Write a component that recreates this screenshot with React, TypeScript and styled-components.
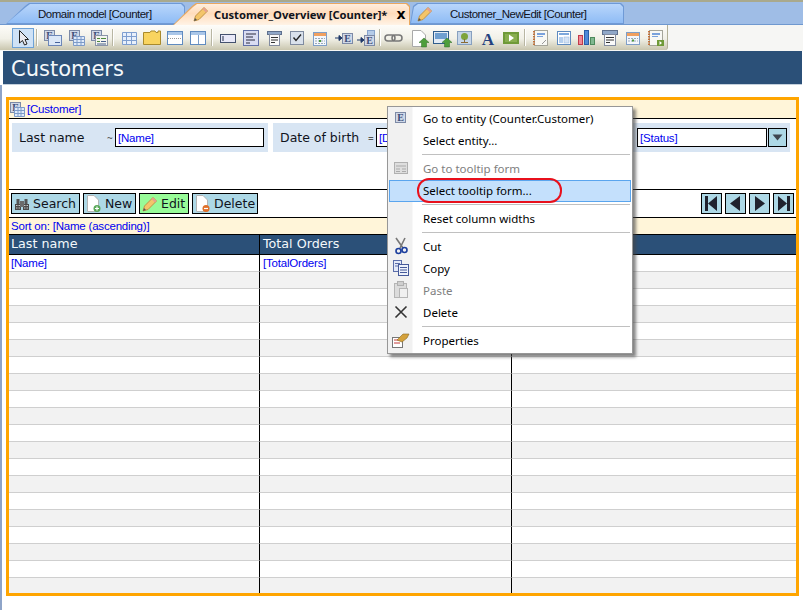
import { ReactNode } from 'react'
import styled, { createGlobalStyle } from 'styled-components'

const GlobalStyle = createGlobalStyle`
  html, body {
    margin: 0;
    padding: 0;
    background: #fff;
  }
  * {
    box-sizing: border-box;
  }
`

const UI_FONT = `"Noto Sans", "Liberation Sans", sans-serif`
const NARROW_FONT = `"Liberation Sans", Arial, sans-serif`
const FORM_FONT = `"DejaVu Sans", "Liberation Sans", sans-serif`

const Page = styled.div`
  position: relative;
  width: 803px;
  height: 610px;
  overflow: hidden;
  background: #fff;
  font-family: ${UI_FONT};
`

const TopEdge = styled.div`
  height: 2px;
  background: #a9a98d;
`

const TabStrip = styled.div`
  display: flex;
  align-items: flex-end;
  height: 23px;
  padding-left: 6px;
  background: #9fbde6;
  border-bottom: 1px solid #6f98cf;
`

const Tab = styled.div<{ $active?: boolean; $slant: number; $width: number; $overlap?: number }>`
  position: relative;
  display: flex;
  align-items: center;
  flex: none;
  width: ${({ $width }) => $width}px;
  height: ${({ $active }) => ($active ? 22 : 21)}px;
  margin-bottom: ${({ $active }) => ($active ? -1 : 0)}px;
  margin-left: ${({ $overlap }) => -($overlap ?? 0)}px;
  z-index: ${({ $active }) => ($active ? 2 : 1)};
  font-family: ${({ $active }) => ($active ? UI_FONT : NARROW_FONT)};
  font-size: ${({ $active }) => ($active ? 11.2 : 11.5)}px;
  font-weight: ${({ $active }) => ($active ? 700 : 400)};
  letter-spacing: ${({ $active }) => ($active ? 0 : -0.5)}px;
  color: #10131c;
  white-space: nowrap;

  &::before,
  &::after {
    content: '';
    position: absolute;
    clip-path: polygon(
      0 100%,
      ${({ $slant }) => $slant}px 3px,
      ${({ $slant }) => $slant + 4}px 0,
      calc(100% - 3px) 0,
      100% 3px,
      100% 100%
    );
  }

  &::before {
    inset: 0;
    background: ${({ $active }) => ($active ? '#e8a860' : '#6f9ad6')};
  }

  &::after {
    inset: 1px 1px ${({ $active }) => ($active ? 0 : 1)}px 1px;
    background: ${({ $active }) =>
      $active
        ? 'linear-gradient(#ffeede, #ffdcbc 45%, #fff3e6)'
        : 'linear-gradient(#b9d6fb, #8fbcf5)'};
  }
`

const TabContent = styled.div<{ $left: number }>`
  position: relative;
  z-index: 1;
  display: flex;
  align-items: center;
  padding-left: ${({ $left }) => $left}px;
`

const TabLabel = styled.span<{ $left: number }>`
  position: relative;
  z-index: 1;
  margin-left: ${({ $left }) => $left}px;
`

const TabClose = styled.span`
  position: relative;
  z-index: 1;
  margin-left: 9px;
  font-family: ${FORM_FONT};
  font-size: 14px;
  line-height: 15px;
  font-weight: 700;
  color: #000;
`

const ToolRow = styled.div`
  height: 26px;
  background: #f6f6f4;
`

const Toolbar = styled.div`
  display: flex;
  align-items: center;
  width: 668px;
  height: 25px;
  padding-left: 3px;
  background: linear-gradient(#fdfcf9, #f1f0e7 55%, #c9c6ae);
  border-right: 1px solid #b2af97;
  border-bottom-right-radius: 3px;
`

const Grip = styled.div`
  width: 5px;
  height: 17px;
  margin: 0 6px 0 3px;
  background: repeating-linear-gradient(#9e9e8c 0 2px, transparent 2px 4px);
  background-size: 2px 100%;
  background-repeat: no-repeat;
`

const ToolSlot = styled.div<{ $selected?: boolean }>`
  display: flex;
  align-items: center;
  justify-content: center;
  flex: none;
  width: ${({ $selected }) => ($selected ? 22 : 23)}px;
  height: ${({ $selected }) => ($selected ? 20 : 22)}px;
  background: ${({ $selected }) => ($selected ? '#cfe2f6' : 'transparent')};
  border: ${({ $selected }) => ($selected ? '1px solid #6ea2d6' : 'none')};
`

const ToolGroup = styled.div`
  display: contents;
`

const ToolSep = styled.div`
  flex: none;
  width: 2px;
  height: 17px;
  margin: 0 3px 0 2px;
  background: linear-gradient(90deg, #b8b6a3 50%, #fff 50%);
`

const HeaderBar = styled.header`
  height: 34px;
  margin: 0 1px 0 3px;
  padding: 3px 0 0 8px;
  background: #2b5078;
  border-bottom: 1px solid #c4d0dc;
  font-family: ${FORM_FONT};
  font-size: 21px;
  line-height: 31px;
  color: #f4f8fb;
`

const Content = styled.main`
  height: 525px;
  padding: 12px 4px 0 6px;
  box-shadow: inset 2px 0 0 #8ea4c8;
`

const Frame = styled.section`
  height: 499px;
  overflow: hidden;
  border: 3px solid #ffa500;
  background: #fff;
`

const EntityRow = styled.div`
  display: flex;
  align-items: center;
  gap: 2px;
  height: 19px;
  background: #fff5d9;
  border-bottom: 1px solid #000;
`

const BlueText = styled.span`
  font-family: ${NARROW_FONT};
  font-size: 11.5px;
  letter-spacing: -0.2px;
  color: #0000f0;
  white-space: nowrap;
`

const FilterArea = styled.div`
  display: grid;
  grid-template-columns: repeat(3, 256px);
  gap: 5px;
  align-items: start;
  height: 71px;
  padding: 4px 0 0 3px;
  border-bottom: 1px solid #000;
`

const FilterBlock = styled.div`
  display: flex;
  align-items: center;
  height: 29px;
  padding-left: 7px;
  background: #d8e5f3;
`

const FilterLabel = styled.span<{ $width: number }>`
  flex: none;
  width: ${({ $width }) => $width}px;
  font-family: ${FORM_FONT};
  font-size: 12.5px;
  color: #10131c;
`

const Operator = styled.span`
  flex: none;
  width: 8px;
  font-size: 10px;
  color: #555;
`

const SearchInput = styled.div<{ $width: number }>`
  display: flex;
  align-items: center;
  flex: none;
  width: ${({ $width }) => $width}px;
  height: 19px;
  padding-left: 2px;
  background: #fff;
  border: 1px solid #000;
`

const DropButton = styled.div`
  display: flex;
  align-items: center;
  justify-content: center;
  flex: none;
  width: 19px;
  height: 19px;
  margin-left: 1px;
  background: #add8e6;
  border: 1px solid #000;
`

const ActionBar = styled.div`
  display: flex;
  align-items: center;
  height: 28px;
  padding: 0 2px;
  border-bottom: 1px solid #000;
`

const ActionButtons = styled.div`
  display: flex;
  gap: 3px;
`

const ActionButton = styled.div<{ $width: number; $green?: boolean }>`
  display: flex;
  align-items: center;
  gap: 3px;
  width: ${({ $width }) => $width}px;
  height: 21px;
  padding-left: 2px;
  background: ${({ $green }) => ($green ? '#98fb98' : '#add8e6')};
  border: 1px solid #000;
  font-family: ${FORM_FONT};
  font-size: 12.5px;
  color: #10131c;
`

const PagingButtons = styled.div`
  display: flex;
  gap: 3px;
  margin-left: auto;
`

const PagingButton = styled.div`
  display: flex;
  align-items: center;
  justify-content: center;
  width: 21px;
  height: 21px;
  background: #add8e6;
  border: 1px solid #000;
`

const SortRow = styled.div`
  display: flex;
  align-items: center;
  height: 17px;
  padding-left: 2px;
  background: #fff5d9;
  border-bottom: 1px solid #000;
`

const GridRow = styled.div`
  display: grid;
  grid-template-columns: 251px 252px 1fr;
`

const HeadCell = styled.div`
  height: 20px;
  padding-left: 2px;
  background: #2b5078;
  border-right: 1px solid #000;
  border-bottom: 1px solid #000;
  font-family: ${FORM_FONT};
  font-size: 12.7px;
  line-height: 18px;
  color: #f4f8fb;

  & + & {
    padding-left: 3px;
  }

  &:last-child {
    border-right: none;
  }
`

const Cell = styled.div<{ $alt: boolean }>`
  display: flex;
  align-items: center;
  height: 17px;
  padding-left: 2px;
  background: ${({ $alt }) => ($alt ? '#f2f2f2' : '#fff')};
  border-right: 1px solid #000;
  border-bottom: 1px solid #cfcfcf;

  & + & {
    padding-left: 3px;
  }

  &:last-child {
    border-right: none;
  }
`

const Menu = styled.div`
  position: absolute;
  left: 387px;
  top: 106px;
  width: 246px;
  padding: 1px;
  background: linear-gradient(90deg, #f1f1f1 24px, #fff 25px);
  border: 1px solid #979797;
  box-shadow: 3px 3px 3px rgba(70, 70, 70, 0.65);
  z-index: 5;
`

const MenuEntry = styled.div<{ $active?: boolean; $disabled?: boolean }>`
  position: relative;
  display: flex;
  align-items: center;
  height: 22px;
  padding-bottom: 2px;
  font-size: 11.5px;
  color: ${({ $disabled }) => ($disabled ? '#808080' : '#000')};
  background: ${({ $active }) => ($active ? '#c4e0fc' : 'transparent')};
  outline: ${({ $active }) => ($active ? '1px solid #5aa5ee' : 'none')};
  outline-offset: -1px;
`

const MenuIcon = styled.span`
  display: flex;
  align-items: center;
  justify-content: center;
  flex: none;
  width: 24px;
  margin-right: 10px;
`

const MenuRule = styled.div`
  height: 1px;
  margin: 2px 1px 3px 33px;
  background: #c0c0c0;
`

const RedOval = styled.div`
  position: absolute;
  left: 28px;
  top: -2px;
  width: 145px;
  height: 25px;
  border: 2px solid #e8101c;
  border-radius: 12px;
`

const Glyph = styled.svg`
  display: block;
  flex: none;
  overflow: visible;
`

const Icon = ({ w = 20, h = 18, children }: { w?: number; h?: number; children: ReactNode }) => (
  <Glyph width={w} height={h} viewBox={`0 0 ${w} ${h}`}>
    {children}
  </Glyph>
)

const EntityBadge = ({ x = 1, y = 1 }: { x?: number; y?: number }) => (
  <>
    <rect x={x + 0.5} y={y + 0.5} width="10" height="10" fill="#cfd8e8" stroke="#7d8aa6" />
    <text x={x + 5.5} y={y + 9} fontSize="10" fontWeight="700" fontFamily="Liberation Serif, serif" textAnchor="middle" fill="#3b4d78">
      E
    </text>
  </>
)

const GreenArrow = () => (
  <path d="M15 9 L20 13.5 H17.5 V18 H12.5 V13.5 H10 Z" fill="#4e9e3c" stroke="#2f6f25" strokeWidth="0.5" />
)

const Page16 = ({ x = 3 }: { x?: number }) => (
  <path d={`M${x + 0.5} 1.5 H${x + 9} L${x + 13.5} 6 V17.5 H${x + 0.5} Z`} fill="#fff" stroke="#a9a9a9" />
)

const Notebook = () => (
  <>
    <rect x="3.5" y="1.5" width="13" height="15" fill="#f8f8f4" stroke="#a5a59a" />
    <path d="M3 2 V17" stroke="#c2713a" strokeWidth="2" strokeDasharray="1.5 1" />
    <rect x="6" y="4" width="8" height="2" fill="#7aa2dc" />
    <rect x="6" y="7" width="6" height="1" fill="#7aa2dc" />
  </>
)

const toolIcons: ReactNode[][] = [
  [
    <Icon key="dv">
      <EntityBadge />
      <rect x="5.5" y="6.5" width="13" height="10" fill="#dbe7f7" stroke="#6d87b8" />
      <rect x="12" y="13" width="5" height="1" fill="#47639a" />
    </Icon>,
    <Icon key="dg">
      <EntityBadge x={3} />
      <path d="M7.5 7.5 H18.5 V16.5 H7.5 Z M7.5 10.5 H18.5 M7.5 13.5 H18.5 M11 7.5 V16.5 M15 7.5 V16.5" fill="#dfeafa" stroke="#7d9bc8" />
    </Icon>,
    <Icon key="tg">
      <EntityBadge x={2} />
      <rect x="6.5" y="6.5" width="12" height="10" fill="#f4f4ee" stroke="#8a94a8" />
      <path d="M8 9.5 H11 M8 12.5 H11 M12 9.5 H17" stroke="#4d8a3c" />
      <path d="M12 12.5 H17 M8 15 H17" stroke="#48608c" />
    </Icon>,
  ],
  [
    <Icon key="tb">
      <path d="M3.5 3.5 H17.5 V15.5 H3.5 Z M3.5 7.5 H17.5 M3.5 11.5 H17.5 M7.5 3.5 V15.5 M12.5 3.5 V15.5" fill="#e8f0fb" stroke="#7f9fd0" />
    </Icon>,
    <Icon key="fd">
      <path d="M1.5 3.5 H8 L9 2 H13 L14 3.5 H16 V2 H18.5 V15.5 H1.5 Z" fill="#f9d45f" stroke="#a98a2c" />
    </Icon>,
    <Icon key="lr">
      <rect x="2.5" y="2.5" width="15" height="13" fill="#fff" stroke="#5f8bc0" />
      <rect x="3" y="3" width="14" height="3" fill="#a9c6e8" />
      <path d="M3 9.5 H17" stroke="#999" strokeDasharray="1 1" />
    </Icon>,
    <Icon key="lc">
      <rect x="2.5" y="2.5" width="15" height="13" fill="#fff" stroke="#5f8bc0" />
      <rect x="3" y="3" width="14" height="3" fill="#a9c6e8" />
      <path d="M10.5 6 V15" stroke="#7a9cc8" />
    </Icon>,
  ],
  [
    <Icon key="tx">
      <rect x="2.5" y="5.5" width="15" height="8" fill="#e9e9f8" stroke="#44516e" />
      <path d="M5 7 V12" stroke="#25304a" />
    </Icon>,
    <Icon key="ta">
      <rect x="2.5" y="1.5" width="15" height="15" fill="#d9dcf2" stroke="#6170a8" />
      <path d="M5 5 H15 M5 8 H12 M5 11 H14 M5 14 H9" stroke="#2b2b3e" />
    </Icon>,
    <Icon key="dd">
      <rect x="3.5" y="2.5" width="14" height="3" fill="#8fa7c8" stroke="#5e708e" />
      <rect x="5.5" y="5.5" width="10" height="11" fill="#fafafa" stroke="#838ca0" />
      <path d="M7 8.5 H14 M7 11 H14 M7 13.5 H11" stroke="#333" />
    </Icon>,
    <Icon key="cb">
      <rect x="3.5" y="2.5" width="13" height="13" fill="#d9e1ec" stroke="#7f8ba0" />
      <path d="M6.5 8.5 L9 11.5 L14 5.5" fill="none" stroke="#222" strokeWidth="1.4" />
    </Icon>,
    <Icon key="dp">
      <rect x="3.5" y="3.5" width="13" height="13" fill="#f4f7fc" stroke="#7f9fc8" />
      <rect x="4" y="4" width="12" height="3" fill="#f0a060" />
      <path d="M5 9.5 H15 M5 12 H15 M5 14.5 H15" stroke="#9ab" strokeDasharray="2 1" />
      <rect x="9" y="11" width="2" height="2" fill="#4d9a3c" />
    </Icon>,
    <Icon key="ae">
      <path d="M2 9 H6 M6 6.5 L9 9 L6 11.5 Z" fill="#1f3868" stroke="#1f3868" />
      <EntityBadge x={9} y={4} />
    </Icon>,
    <Icon key="as">
      <rect x="11.5" y="1.5" width="7" height="10" fill="#b5cbe8" stroke="#88a4cc" />
      <path d="M1 11 H5 M5 8.5 L8 11 L5 13.5 Z" fill="#1f3868" stroke="#1f3868" />
      <EntityBadge x={8} y={6} />
    </Icon>,
  ],
  [
    <Icon key="ln">
      <rect x="-1" y="6" width="10" height="6" rx="3" fill="none" stroke="#777" strokeWidth="1.5" />
      <rect x="6" y="6" width="10" height="6" rx="3" fill="none" stroke="#777" strokeWidth="1.5" />
    </Icon>,
    <Icon key="pu">
      <Page16 />
      <GreenArrow />
    </Icon>,
    <Icon key="iu">
      <rect x="1.5" y="2.5" width="15" height="12" fill="#e2ebf5" stroke="#2f5d8c" />
      <rect x="3" y="4" width="12" height="6" fill="#6f9fd0" />
      <GreenArrow />
    </Icon>,
    <Icon key="im">
      <rect x="2.5" y="2.5" width="14" height="13" fill="#c6d6e8" stroke="#87a0bf" />
      <circle cx="9.5" cy="7.5" r="3.5" fill="#7ea43c" />
      <path d="M9.5 10 V13 M6 13.5 H13" stroke="#8a6b34" />
    </Icon>,
    <Icon key="lb">
      <text x="10" y="15.5" fontSize="17" fontWeight="700" fontFamily="Liberation Serif, serif" textAnchor="middle" fill="#24417f">
        A
      </text>
    </Icon>,
    <Icon key="mv" w={18}>
      <rect x="1" y="3" width="16" height="12" fill="#6f9a38" />
      <rect x="3" y="5" width="12" height="8" fill="#88ae4e" />
      <path d="M7 5.5 L12 9 L7 12.5 Z" fill="#fff" />
    </Icon>,
  ],
  [
    <Icon key="nb">
      <Notebook />
      <path d="M11 15 L15 11" stroke="#999" />
    </Icon>,
    <Icon key="lo">
      <rect x="3.5" y="2.5" width="13" height="13" fill="#fff" stroke="#5f8bc0" />
      <rect x="5" y="4" width="10" height="2" fill="#7ea8dc" />
      <rect x="5" y="8" width="4" height="6" fill="#b5cfee" />
      <rect x="10" y="8" width="5" height="6" fill="#d5e3f5" stroke="#8fb0da" strokeWidth="0.5" />
    </Icon>,
    <Icon key="ch">
      <rect x="1.5" y="6.5" width="4" height="9" fill="#f08a96" stroke="#c23a4a" />
      <rect x="7.5" y="1.5" width="4" height="14" fill="#4f8ad8" stroke="#2b5ea8" />
      <rect x="13.5" y="8.5" width="4" height="7" fill="#80b890" stroke="#4d8a5c" />
    </Icon>,
    <Icon key="wn">
      <rect x="2.5" y="1.5" width="15" height="4" fill="#8fa7c8" stroke="#5e708e" />
      <rect x="4.5" y="5.5" width="11" height="11" fill="#fafafa" stroke="#838ca0" />
      <path d="M6 8.5 H14 M6 11 H14 M6 13.5 H10" stroke="#333" />
    </Icon>,
    <Icon key="ca">
      <rect x="3.5" y="3.5" width="13" height="12" fill="#f4f7fc" stroke="#7f9fc8" />
      <rect x="4" y="4" width="12" height="3" fill="#f0a060" />
      <path d="M5 9.5 H15 M5 12 H15" stroke="#9ab" strokeDasharray="2 1" />
      <rect x="9" y="10.5" width="2" height="2" fill="#4d9a3c" />
    </Icon>,
    <Icon key="np">
      <Notebook />
      <rect x="11" y="11" width="7" height="6" fill="#6f9a38" />
      <path d="M13.5 12 L16 14 L13.5 16 Z" fill="#fff" />
    </Icon>,
  ],
]

const Pointer = () => (
  <Icon w={14} h={18}>
    <path d="M3.5 1.5 V14 L6.5 11.5 L8.5 16 L11 15 L9 10.5 H12.5 Z" fill="#e9e9ee" stroke="#222" />
  </Icon>
)

const Pencil = ({ size = 16 }: { size?: number }) => (
  <Glyph width={size} height={size} viewBox="0 0 16 16">
    <path d="M1 15 L2.5 10 L11 1.5 L14.5 5 L6 13.5 Z" fill="#f4c56a" stroke="#c29445" />
    <path d="M1 15 L2 12 L4 14 Z" fill="#555" />
    <path d="M11 1.5 L14.5 5 L13 6.5 L9.5 3 Z" fill="#e8a090" />
  </Glyph>
)

const Binoculars = () => (
  <Icon w={16} h={16}>
    <path d="M1 8 H7 V14 H1 Z M9 8 H15 V14 H9 Z" fill="#4a4a4a" />
    <path d="M2 9.5 H3.5 M4.5 9.5 H6 M2 12 H3.5 M4.5 12 H6 M10 9.5 H11.5 M12.5 9.5 H14 M10 12 H11.5 M12.5 12 H14" stroke="#c8c8c8" />
    <rect x="6" y="5" width="4" height="6" fill="#6b6b6b" />
    <rect x="2.5" y="3" width="3" height="5" fill="#555" />
    <rect x="10.5" y="3" width="3" height="5" fill="#555" />
  </Icon>
)

const PageBadge = ({ fill, mark }: { fill: string; mark: string }) => (
  <Icon w={16} h={18}>
    <path d="M1.5 0.5 H8 L12.5 5 V16.5 H1.5 Z" fill="#fff" stroke="#b5b5b5" />
    <circle cx="11" cy="13.5" r="3.5" fill={fill} />
    <path d={mark} stroke="#fff" strokeWidth="1.2" />
  </Icon>
)

const PagingGlyph = ({ kind }: { kind: 'first' | 'prev' | 'next' | 'last' }) => {
  const paths = {
    first: 'M3 2 H6 V17 H3 Z M6 9.5 L15 2 V17 Z',
    prev: 'M4 9.5 L14 2 V17 Z',
    next: 'M15 9.5 L5 2 V17 Z',
    last: 'M16 2 H13 V17 H16 Z M13 9.5 L4 2 V17 Z',
  }
  return (
    <Icon w={19} h={19}>
      <path d={paths[kind]} fill="#20222e" />
    </Icon>
  )
}

const Scissors = () => (
  <Icon w={16} h={18}>
    <path d="M3 1 L10 11 M12 1 L7 11" stroke="#777" strokeWidth="1.6" />
    <circle cx="5.5" cy="14" r="2.5" fill="none" stroke="#1c3f9e" strokeWidth="1.6" />
    <circle cx="11.5" cy="13" r="2.5" fill="none" stroke="#1c3f9e" strokeWidth="1.6" />
  </Icon>
)

const CopyIcon = () => (
  <Icon w={16} h={16}>
    <rect x="0.5" y="0.5" width="8" height="11" fill="#e3e9f8" stroke="#5c6eaa" />
    <path d="M2 3.5 H7 M2 6 H7" stroke="#5c6eaa" />
    <rect x="5.5" y="4.5" width="10" height="11" fill="#eef2fb" stroke="#465a9a" />
    <path d="M7 7.5 H14 M7 10 H14 M7 12.5 H14" stroke="#465a9a" />
  </Icon>
)

const PasteIcon = () => (
  <Icon w={16} h={18}>
    <rect x="1.5" y="2.5" width="12" height="14" fill="#dcdcdc" stroke="#b5b5b5" />
    <rect x="4.5" y="0.5" width="6" height="4" fill="#cfcfcf" stroke="#b0b0b0" />
    <rect x="6.5" y="7.5" width="8" height="9" fill="#f0f0f0" stroke="#b5b5b5" />
  </Icon>
)

const DeleteIcon = () => (
  <Icon w={14} h={14}>
    <path d="M1.5 1.5 L12.5 12.5 M12.5 1.5 L1.5 12.5" stroke="#333" strokeWidth="1.6" />
  </Icon>
)

const PropertiesIcon = () => (
  <Icon w={18} h={16}>
    <rect x="0.5" y="5.5" width="10" height="10" fill="#fff" stroke="#777" />
    <path d="M2 8 H8 M2 11 H8" stroke="#c23a3a" />
    <path d="M5 8 L11 2 L17 2 L15 6 L10 10 Z" fill="#d4a13c" stroke="#8a6a24" strokeWidth="0.6" />
  </Icon>
)

const FormIcon = () => (
  <Icon w={15} h={15}>
    <rect x="0.5" y="1.5" width="13" height="11" fill="#dedede" stroke="#b0b0b0" />
    <path d="M2 5 H12 M2 8 H6 M8 8 H12 M2 10.5 H6 M8 10.5 H12" stroke="#aaa" />
  </Icon>
)

const ROW_COUNT = 20

function App() {
  return (
    <Page>
      <GlobalStyle />
      <TopEdge />
      <TabStrip>
        <Tab $slant={19} $width={179}>
          <TabLabel $left={32}>Domain model [Counter]</TabLabel>
        </Tab>
        <Tab $active $slant={19} $width={237} $overlap={12}>
          <TabContent $left={20}>
            <Pencil />
          </TabContent>
          <TabLabel $left={5}>Customer_Overview [Counter]*</TabLabel>
          <TabClose>x</TabClose>
        </Tab>
        <Tab $slant={3} $width={214}>
          <TabContent $left={7}>
            <Pencil />
          </TabContent>
          <TabLabel $left={17}>Customer_NewEdit [Counter]</TabLabel>
        </Tab>
      </TabStrip>
      <ToolRow>
        <Toolbar>
          <Grip />
          <ToolSlot $selected>
            <Pointer />
          </ToolSlot>
          {toolIcons.map((group, groupIndex) => (
            <ToolGroup key={groupIndex}>
              <ToolSep />
              {group.map((icon, iconIndex) => (
                <ToolSlot key={iconIndex}>{icon}</ToolSlot>
              ))}
            </ToolGroup>
          ))}
        </Toolbar>
      </ToolRow>
      <HeaderBar>Customers</HeaderBar>
      <Content>
        <Frame>
          <EntityRow>
            <Icon w={16} h={16}>
              <EntityBadge />
              <path d="M5.5 6.5 H15.5 V15.5 H5.5 Z M5.5 9.5 H15.5 M5.5 12.5 H15.5 M9 6.5 V15.5 M12 6.5 V15.5" fill="#dfeafa" stroke="#7d9bc8" />
            </Icon>
            <BlueText>[Customer]</BlueText>
          </EntityRow>
          <FilterArea>
            <FilterBlock>
              <FilterLabel $width={88}>Last name</FilterLabel>
              <Operator>~</Operator>
              <SearchInput $width={149}>
                <BlueText>[Name]</BlueText>
              </SearchInput>
            </FilterBlock>
            <FilterBlock>
              <FilterLabel $width={88}>Date of birth</FilterLabel>
              <Operator>=</Operator>
              <SearchInput $width={149}>
                <BlueText>[DateOfBirth]</BlueText>
              </SearchInput>
            </FilterBlock>
            <FilterBlock>
              <FilterLabel $width={96}>Status</FilterLabel>
              <SearchInput $width={130}>
                <BlueText>[Status]</BlueText>
              </SearchInput>
              <DropButton>
                <Icon w={11} h={7}>
                  <path d="M0.5 0.5 H10.5 L5.5 6.5 Z" fill="#3f4650" />
                </Icon>
              </DropButton>
            </FilterBlock>
          </FilterArea>
          <ActionBar>
            <ActionButtons>
              <ActionButton $width={69}>
                <Binoculars />
                Search
              </ActionButton>
              <ActionButton $width={53}>
                <PageBadge fill="#5aa85a" mark="M9 13.5 H13 M11 11.5 V15.5" />
                New
              </ActionButton>
              <ActionButton $width={50} $green>
                <Pencil />
                Edit
              </ActionButton>
              <ActionButton $width={66}>
                <PageBadge fill="#e0702a" mark="M9 13.5 H13" />
                Delete
              </ActionButton>
            </ActionButtons>
            <PagingButtons>
              <PagingButton>
                <PagingGlyph kind="first" />
              </PagingButton>
              <PagingButton>
                <PagingGlyph kind="prev" />
              </PagingButton>
              <PagingButton>
                <PagingGlyph kind="next" />
              </PagingButton>
              <PagingButton>
                <PagingGlyph kind="last" />
              </PagingButton>
            </PagingButtons>
          </ActionBar>
          <SortRow>
            <BlueText>Sort on: [Name (ascending)]</BlueText>
          </SortRow>
          <GridRow>
            <HeadCell>Last name</HeadCell>
            <HeadCell>Total Orders</HeadCell>
            <HeadCell />
          </GridRow>
          {Array.from({ length: ROW_COUNT }, (_, index) => (
            <GridRow key={index}>
              <Cell $alt={index % 2 === 1}>{index === 0 && <BlueText>[Name]</BlueText>}</Cell>
              <Cell $alt={index % 2 === 1}>{index === 0 && <BlueText>[TotalOrders]</BlueText>}</Cell>
              <Cell $alt={index % 2 === 1} />
            </GridRow>
          ))}
        </Frame>
      </Content>
      <Menu>
        <MenuEntry>
          <MenuIcon>
            <Icon w={14} h={14}>
              <EntityBadge />
            </Icon>
          </MenuIcon>
          Go to entity (Counter.Customer)
        </MenuEntry>
        <MenuEntry>
          <MenuIcon />
          Select entity...
        </MenuEntry>
        <MenuRule />
        <MenuEntry $disabled>
          <MenuIcon>
            <FormIcon />
          </MenuIcon>
          Go to tooltip form
        </MenuEntry>
        <MenuEntry $active>
          <MenuIcon />
          Select tooltip form...
          <RedOval />
        </MenuEntry>
        <MenuRule />
        <MenuEntry>
          <MenuIcon />
          Reset column widths
        </MenuEntry>
        <MenuRule />
        <MenuEntry>
          <MenuIcon>
            <Scissors />
          </MenuIcon>
          Cut
        </MenuEntry>
        <MenuEntry>
          <MenuIcon>
            <CopyIcon />
          </MenuIcon>
          Copy
        </MenuEntry>
        <MenuEntry $disabled>
          <MenuIcon>
            <PasteIcon />
          </MenuIcon>
          Paste
        </MenuEntry>
        <MenuEntry>
          <MenuIcon>
            <DeleteIcon />
          </MenuIcon>
          Delete
        </MenuEntry>
        <MenuRule />
        <MenuEntry>
          <MenuIcon>
            <PropertiesIcon />
          </MenuIcon>
          Properties
        </MenuEntry>
      </Menu>
    </Page>
  )
}

export default App
